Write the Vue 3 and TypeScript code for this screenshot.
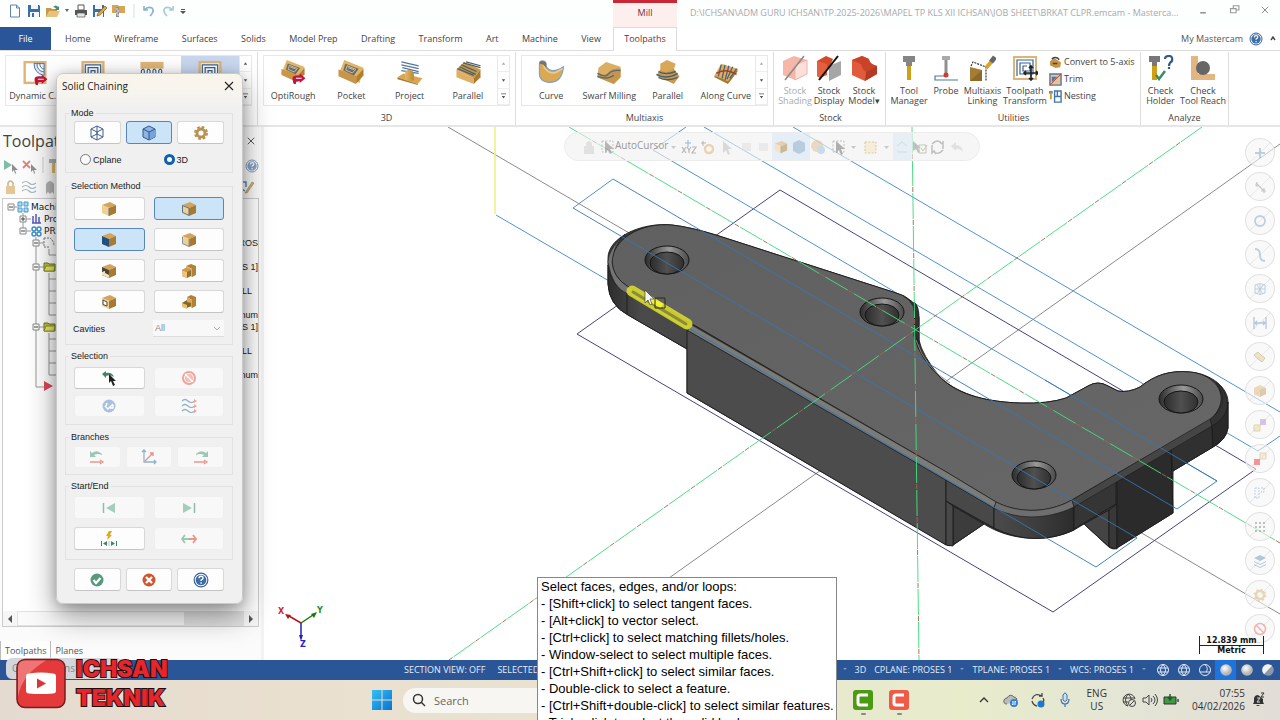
<script setup lang="ts">
import { ref } from 'vue'

interface Item { label: string; icon: string; disabled?: boolean; active?: boolean; width?: string }
interface Gallery { title: string; items: Item[]; lead: string }

const tabs: string[] = ['Home', 'Wireframe', 'Surfaces', 'Solids', 'Model Prep', 'Drafting', 'Transform', 'Art', 'Machine', 'View']

const galleries: Gallery[] = [
  {
    title: '', lead: '#555',
    items: [
      { label: 'Dynamic C...', icon: 'g-dynamic' },
      { label: '', icon: 'g-spiral' },
      { label: '', icon: 'g-face' },
      { label: '', icon: 'g-spiral', active: true },
    ],
  },
  {
    title: '3D', lead: '#aaa',
    items: [
      { label: 'OptiRough', icon: 'g-optirough' },
      { label: 'Pocket', icon: 'g-pocket' },
      { label: 'Project', icon: 'g-project' },
      { label: 'Parallel', icon: 'g-parallel' },
    ],
  },
  {
    title: 'Multiaxis', lead: '#aaa',
    items: [
      { label: 'Curve', icon: 'g-curve' },
      { label: 'Swarf Milling', icon: 'g-swarf' },
      { label: 'Parallel', icon: 'g-parallel5' },
      { label: 'Along Curve', icon: 'g-along' },
    ],
  },
]
const stock: Item[] = [
  { label: 'Stock\nShading', icon: 's-shading', disabled: true, width: 'w34' },
  { label: 'Stock\nDisplay', icon: 's-display', width: 'w34' },
  { label: 'Stock\nModel▾', icon: 's-model', width: 'w36' },
]
const utilities: Item[] = [
  { label: 'Tool\nManager', icon: 'u-tool', width: 'w40' },
  { label: 'Probe', icon: 'u-probe', width: 'w34' },
  { label: 'Multiaxis\nLinking', icon: 'u-link', width: 'w38' },
  { label: 'Toolpath\nTransform', icon: 'u-transform', width: 'w46' },
]
const smallUtils: Item[] = [
  { label: 'Convert to 5-axis', icon: 'u-convert' },
  { label: 'Trim', icon: 'u-trim' },
  { label: 'Nesting', icon: 'u-nest' },
]
const analyze: Item[] = [
  { label: 'Check\nHolder', icon: 'a-holder', width: 'w38' },
  { label: 'Check\nTool Reach', icon: 'a-reach', width: 'w46' },
]
const quick: string[] = ['q-new', 'q-save', 'q-open', 'caret', 'q-print', 'q-saveas', 'q-zip', 'sep', 'q-undo', 'q-redo', 'caret2']
const methods: { icon: string; on?: boolean }[] = [
  { icon: 'c-edge' }, { icon: 'c-loop', on: true }, { icon: 'c-face', on: true }, { icon: 'c-outer' },
  { icon: 'c-partial' }, { icon: 'c-stack' }, { icon: 'c-inner' }, { icon: 'c-stack2' },
]
const hints: string[] = [
  'Select faces, edges, and/or loops:',
  '- [Shift+click] to select tangent faces.',
  '- [Alt+click] to vector select.',
  '- [Ctrl+click] to select matching fillets/holes.',
  '- Window-select to select multiple faces.',
  '- [Ctrl+Shift+click] to select similar faces.',
  '- Double-click to select a feature.',
  '- [Ctrl+Shift+double-click] to select similar features.',
  '- Triple-click to select the solid body.',
]
const masks: string[] = ['m-plus', 'm-line', 'm-circle', 'm-spline', 'm-mesh', 'm-dim', 'm-surf', 'm-solid', 'm-result', 'm-group', 'm-dash', 'm-points', 'm-layers', 'm-gear', 'm-none']
const tree: { level: string; label: string; tail: string }[] = [
  { level: 'l0', label: 'Machin', tail: '' },
  { level: 'l1', label: 'Pro', tail: '' },
  { level: 'l1', label: 'PRO', tail: '' },
  { level: 'l1', label: '', tail: 'ROS' },
  { level: 'l1', label: '', tail: '' },
  { level: 'l1', label: '', tail: 'S 1]' },
  { level: 'l1', label: '', tail: '' },
  { level: 'l1', label: '', tail: 'LL' },
  { level: 'l1', label: '', tail: '' },
  { level: 'l1', label: '', tail: 'num' },
  { level: 'l1', label: '', tail: 'S 1]' },
  { level: 'l1', label: '', tail: '' },
  { level: 'l1', label: '', tail: 'LL' },
  { level: 'l1', label: '', tail: '' },
  { level: 'l1', label: '', tail: 'num' },
]
const holes: [number, number][] = [[667, 260], [882, 312], [1034, 475], [1181, 399]]
const spheres: string[] = ['b-wire', 'b-wire', 'b-wire2', 'b-ball', 'b-ball', 'b-half']
const plane = ref('3D')
const query = ref('')
</script>

<template>
  <div class="app">
    <svg class="defs" aria-hidden="true">
      <defs>
        <linearGradient id="gTop" x1="0" y1="0" x2="1" y2="1"><stop offset="0" stop-color="#606060" /><stop offset="1" stop-color="#676767" /></linearGradient>
        <linearGradient id="gRound" x1="0" x2="1"><stop offset="0" stop-color="#4b4b4b" /><stop offset=".5" stop-color="#3e3e3e" /><stop offset="1" stop-color="#2c2c2c" /></linearGradient>
        <linearGradient id="gLeft" x1="0" x2="1"><stop offset="0" stop-color="#2d2d2d" /><stop offset=".4" stop-color="#4a4a4a" /><stop offset="1" stop-color="#474747" /></linearGradient>
        <linearGradient id="gHole" x1="0" x2="1"><stop offset="0" stop-color="#2b2b2b" /><stop offset=".55" stop-color="#9a9a9a" /><stop offset="1" stop-color="#4a4a4a" /></linearGradient>
        <linearGradient id="gBore" x1="0" x2="1"><stop offset="0" stop-color="#2c2c2c" /><stop offset=".5" stop-color="#505050" /><stop offset="1" stop-color="#303030" /></linearGradient>
        <radialGradient id="gBall" cx=".4" cy=".35"><stop offset="0" stop-color="#fff" /><stop offset="1" stop-color="#b5b5b5" /></radialGradient>
        <linearGradient id="gWin" x1="0" y1="0" x2="1" y2="1"><stop offset="0" stop-color="#35c0f5" /><stop offset="1" stop-color="#0a72cf" /></linearGradient>
        <linearGradient id="gOchre" x1="0" x2="1"><stop offset="0" stop-color="#e5b865" /><stop offset="1" stop-color="#b98836" /></linearGradient>
      </defs>

      <symbol id="q-new" viewBox="0 0 14 14"><path d="M2.500 1h6l3 3v9h-9z" fill="#fff" stroke="#5d83ad" /><path d="M8.500 1v3h3" fill="none" stroke="#5d83ad" /></symbol>
      <symbol id="q-save" viewBox="0 0 14 14"><path d="M1 1h11l1 1v11H1z" fill="#3a6fa5" /><path d="M4 1h7v4H4zM3 8h9v5H3z" fill="#f4f6f9" /><path d="M5 9h2v4H5z" fill="#3a6fa5" /></symbol>
      <symbol id="q-open" viewBox="0 0 14 14"><path d="M0 4h5l1 1h5v8H0z" fill="#c79a4b" /><path d="M3 7h11l-3 6H0z" fill="#e8c27d" /><path d="M7 3q3-3 5 0l1-1v4H9l1-1.500Q9 3 7 3z" fill="#4b8d6f" /></symbol>
      <symbol id="q-print" viewBox="0 0 14 14"><path d="M4 1h6v5H4z" fill="#fff" stroke="#555" /><path d="M1 6h12v5H1z" fill="#555" /><path d="M3 9h8v4H3z" fill="#e6e6e6" stroke="#555" stroke-width=".7" /></symbol>
      <symbol id="q-saveas" viewBox="0 0 14 14"><path d="M0 1h11v12H0z" fill="#3a6fa5" /><path d="M2 1h7v4H2zM2 8h8v5H2z" fill="#f4f6f9" /><path d="M4 12l1-3 7-7 2 2-7 7z" fill="#e4a83a" stroke="#5c4a22" stroke-width=".6" /></symbol>
      <symbol id="q-zip" viewBox="0 0 14 14"><path d="M0 1h6l1 1h6v7H0z" fill="#d6a556" /><path d="M4 3h3v10H4z" fill="#8d8d8d" /><path d="M4 5h2M5 7h2M4 9h2M5 11h2" stroke="#eee" /></symbol>
      <symbol id="q-undo" viewBox="0 0 14 14"><path d="M2 2v4h4M2 6q4-4 8-2 3 3-2 8" fill="none" stroke="#8bb1d0" stroke-width="1.600" /></symbol>
      <symbol id="q-redo" viewBox="0 0 14 14"><path d="M12 2v4H8M12 6Q8 2 4 4q-3 3 2 8" fill="none" stroke="#a8c9d8" stroke-width="1.600" /></symbol>
      <symbol id="caret" viewBox="0 0 4 14"><path d="M0 5h4L2 8z" fill="#666" /></symbol>
      <symbol id="caret2" viewBox="0 0 6 14"><path d="M0 7h6L3 10zM1 5h4v1H1z" fill="#555" /></symbol>
      <symbol id="sep" viewBox="0 0 2 14"><path d="M1 0v14" stroke="#ddd" /></symbol>

      <symbol id="arrowbadge" viewBox="0 0 14 12"><path d="M1 8Q-1 2 5 2h3V0l6 5-6 5V8H5q-1 0-1 3H2q-1-1-1-3z" fill="#c2143c" /><path d="M4 5h6" stroke="#fff" stroke-width="1.200" /></symbol>
      <symbol id="g-dynamic" viewBox="0 0 26 26"><path d="M1 1h24v24H1z" fill="#dfb577" /><path d="M3.500 3.500h19v19h-19z" fill="#fff" /><path d="M12 3.500h10.500V16Q12 14 12 3.500zM15 3.500q0 8 7.500 9M18 3.500q0 5 4.500 6" fill="#dde8f2" stroke="#4a6f97" /><use href="#arrowbadge" x="12" y="15" width="14" height="12" /></symbol>
      <symbol id="g-spiral" viewBox="0 0 26 26"><path d="M1 1h24v24H1z" fill="#dfb577" /><path d="M3.500 3.500h19v19h-19z" fill="#fff" /><path d="M5 22V5h16v15H8V8h10v9h-7v-6h4v3" fill="none" stroke="#3b638f" stroke-width="1.300" /></symbol>
      <symbol id="g-face" viewBox="0 0 26 26"><path d="M1 2h24v7H1z" fill="#dfb577" /><path d="M2 22V11q2-3 3 0v9q1 3 3 0v-9q1-3 3 0v9q1 3 3 0v-9q1-3 3 0v9q1 3 3 0v-9q2-3 3 0v11" fill="none" stroke="#3b638f" stroke-width="1.200" /></symbol>
      <symbol id="g-pocket" viewBox="0 0 26 26"><path d="M6 0l20 8-4 16L0 15z" fill="#e2b566" /><path d="M0 10l19 7-1 8L0 17z" fill="#c8954a" /><path d="M26 9l-7 8-1 8 8-9z" fill="#b07f33" /><path d="M7 4l14 5-5 7-11-5z" fill="#6d6b5f" /><path d="M9 6l9 3.500-3.500 4-7-3zM10 8l6 2" fill="none" stroke="#c9c6b3" /></symbol>
      <symbol id="g-optirough" viewBox="0 0 26 26"><use href="#g-pocket" width="26" height="24" /><use href="#arrowbadge" x="12" y="14" width="14" height="12" /></symbol>
      <symbol id="g-project" viewBox="0 0 26 26"><path d="M4 2l18 4M4 5l18 4M5 8l17 4M4 11l18 3" stroke="#52779f" stroke-width="1.300" /><path d="M0 18l6-4 20 5-5 6z" fill="#d9a651" /><path d="M0 18l21 7v1L0 20z" fill="#a87a31" /><path d="M8 12q5-4 9 1v8q-5 2-9-1z" fill="url(#gOchre)" /></symbol>
      <symbol id="g-parallel" viewBox="0 0 26 26"><path d="M1 10L9 2l17 8-7 9z" fill="#c9984a" /><path d="M1 10l18 9v6L1 18z" fill="#dfb063" /><path d="M26 10l-7 9v6l7-7z" fill="#a87a31" /><path d="M2 9l17 7M4 7l17 8M6 5l16 7M8 3l18 5M11 2l15 4" stroke="#4d5f66" stroke-width="1.300" /></symbol>
      <symbol id="g-curve" viewBox="0 0 26 26"><path d="M1 4q0-3 3-3t4 3q-1 4 3 6 6 3 15-3-1 9-5 13-5 4-12 3Q1 21 1 15z" fill="#dba956" stroke="#7fa3c4" stroke-width="1.300" /><path d="M3 4q3 0 3 4 5 7 12 5l7-4" fill="none" stroke="#f0cd8d" stroke-width="1.500" /><path d="M1 4q0-3 3-3t4 3v4L5 5z" fill="#7c7462" /></symbol>
      <symbol id="g-swarf" viewBox="0 0 26 26"><path d="M2 8l8-6 15 5v11l-7 7L1 18z" fill="#dcae62" /><path d="M2 13q7 5 11-1 4-4 12-3v9l-7 7-17-7z" fill="#c9954a" /><path d="M1 14q9 5 12 0 4-4 12-3M1 17q10 4 17-1" fill="none" stroke="#526d83" stroke-width="1.500" /></symbol>
      <symbol id="g-parallel5" viewBox="0 0 26 26"><path d="M5 4l7-4 9 4-3 9H5z" fill="#d9a857" /><path d="M5 10l-4 6 18 9 6-8-6-8-8 4z" fill="#cb9a4b" /><path d="M3 12q8 4 18 0M1 15q10 6 22-1M3 18q9 5 20 0" fill="none" stroke="#495e70" stroke-width="1.500" /></symbol>
      <symbol id="g-along" viewBox="0 0 26 26"><path d="M1 16l7-12 17 5-6 11-4 4z" fill="#dcae60" /><path d="M1 16l14 6 10-13v3L15 25 1 18z" fill="#a87a31" /><path d="M8 5L5 17M12 5l-3 14M16 6l-4 15M20 7l-6 13M24 9l-7 10" stroke="#4b6072" stroke-width="1.300" /><path d="M3 14q9-6 21 1" fill="none" stroke="#ad392f" stroke-width="1.500" /></symbol>

      <symbol id="s-display" viewBox="0 0 26 26"><path d="M1 6l9-5 7 3-3 7-10 12-3-2z" fill="#d4492a" /><path d="M1 6l10 3v11L4 23l-3-2z" fill="#e3603e" /><path d="M25 6v14l-12 6V11z" fill="#a6a6a6" /><path d="M3 25L22 1" stroke="#111" stroke-width="2" /></symbol>
      <symbol id="s-shading" viewBox="0 0 26 26"><path d="M1 6l11-5 13 4v14l-12 6-12-5z" fill="#f6b6a8" /><path d="M25 5v14l-12 6V10z" fill="#fbe0da" stroke="#efb3a8" /><path d="M3 25L22 1" stroke="#888" stroke-width="1.500" /></symbol>
      <symbol id="s-model" viewBox="0 0 26 26"><path d="M1 5l10-4 7 3q0 5 8 7v8l-12 7L1 20z" fill="#e05a3b" /><path d="M11 1l7 3q0 5 8 7l-11 6q-4-3-5-8L1 5z" fill="#c8432a" /><path d="M15 17l11-6v8l-12 7z" fill="#b23a22" /></symbol>
      <symbol id="u-tool" viewBox="0 0 26 26"><path d="M7 1h12v6h-3v4h-6V7H7z" fill="#858585" /><path d="M11 11h4v14h-4z" fill="#cf9f16" /></symbol>
      <symbol id="u-probe" viewBox="0 0 26 26"><path d="M9 1h8v4h-8z" fill="#aaa" /><path d="M13 5v16" stroke="#8f8f8f" stroke-width="3" /><circle cx="13" cy="20" r="2.500" fill="#d23a2e" /><path d="M25 25H2v-4h9" fill="none" stroke="#52779f" stroke-width="1.200" /></symbol>
      <symbol id="u-link" viewBox="0 0 26 26"><path d="M0 12l12 3v11H0z" fill="#a57c33" /><path d="M0 26l12-11v11z" fill="#8d6a2a" /><path d="M1 11l2-4 13 5v14" fill="none" stroke="#333" stroke-width="1.200" stroke-dasharray="2 1" /><path d="M16 13l6-7" stroke="#d9a423" stroke-width="4" /><path d="M21 7l4-5" stroke="#666" stroke-width="5" /></symbol>
      <symbol id="u-transform" viewBox="0 0 26 26"><path d="M1 1h24v24H1z" fill="#dfb577" /><path d="M3 3h20v20H3z" fill="#fff" /><path d="M5 21V5h16v14H8V8h10v8h-7v-5h4" fill="none" stroke="#3b638f" stroke-width="1.200" /><path d="M19 11v14M12 18h14M17 13l2-2 2 2M17 23l2 2 2-2M14 16l-2 2 2 2M24 16l2 2-2 2" fill="none" stroke="#222" stroke-width="1.700" /></symbol>
      <symbol id="u-convert" viewBox="0 0 14 14"><path d="M1 6l4-4 8 5-1 5-5 1-6-3z" fill="#c69443" /><path d="M3 3q5-3 8 1M4 8h5" fill="none" stroke="#444" stroke-width="1.500" /></symbol>
      <symbol id="u-trim" viewBox="0 0 14 14"><path d="M1 1h12v12H1z" fill="#e3c397" stroke="#55779b" stroke-width="1.500" /><path d="M3 4h6L3 10z" fill="#52779f" /><path d="M1 13L13 1" stroke="#b4453a" /></symbol>
      <symbol id="u-nest" viewBox="0 0 14 14"><path d="M0 1h4v3H0z" fill="#888" /><path d="M2 4v6" stroke="#cf9f16" stroke-width="2" /><path d="M6 1h7v12H6zM6 7h7M9 7V1" fill="none" stroke="#3f75ab" stroke-width="1.500" /></symbol>
      <symbol id="a-holder" viewBox="0 0 26 26"><path d="M1 1h11v6H9v4H4V7H1z" fill="#777" /><path d="M4 11h5v14H4z" fill="#cf9f16" /><path d="M8 20l3 4 6-8" fill="none" stroke="#3b8b63" stroke-width="2.500" /><path d="M17 4q0-3 4-3t3 5q-3 2-3 5M21 12v2" fill="none" stroke="#33598c" stroke-width="2.200" /></symbol>
      <symbol id="a-reach" viewBox="0 0 26 26"><path d="M1 1h7v18h17v6H1z" fill="#e2b680" /><circle cx="13" cy="13" r="7" fill="#666" /></symbol>

      <symbol id="i-help" viewBox="0 0 14 14"><circle cx="7" cy="7" r="6" fill="#fff" stroke="#345f96" /><circle cx="7" cy="7" r="4.700" fill="#3d6da8" /><path d="M5.300 5.500q0-1.800 1.800-1.800t1.700 1.500q0 1-1.700 1.800v.8M7.100 9v1.200" fill="none" stroke="#fff" stroke-width="1.200" /></symbol>
      <symbol id="i-x" viewBox="0 0 10 10"><path d="M1 1l8 8M9 1L1 9" stroke="currentColor" stroke-width="1.100" /></symbol>

      <symbol id="d-wire" viewBox="0 0 16 16"><path d="M8 1l6 3v8l-6 3-6-3V4zM2 4l6 3 6-3M8 7v8M8 1v8M2 12l6-3 6 3" fill="none" stroke="#3f5f8f" /></symbol>
      <symbol id="d-solid" viewBox="0 0 16 16"><path d="M8 1l6 3v8l-6 3-6-3V4z" fill="#8db4e2" stroke="#2f578f" /><path d="M8 7l6-3v8l-6 3z" fill="#79a3d8" /><path d="M2 4l6 3 6-3M8 7v8" fill="none" stroke="#2f578f" /></symbol>
      <symbol id="d-gear" viewBox="0 0 16 16"><circle cx="8" cy="8" r="4" fill="none" stroke="#b8914f" stroke-width="2.800" /><circle cx="8" cy="8" r="6" fill="none" stroke="#b8914f" stroke-width="2" stroke-dasharray="2.700 2.012" /></symbol>
      <symbol id="c-base" viewBox="0 0 16 16"><path d="M1 4l8-3 6 3-7 3z" fill="#d3a55c" /><path d="M1 4l7 3v8l-7-3z" fill="#f3ce8e" /><path d="M8 7l7-3v8l-7 3z" fill="#a87a31" /></symbol>
      <symbol id="c-edge" viewBox="0 0 16 16"><use href="#c-base" /><path d="M8 7v8" stroke="#5b7893" /></symbol>
      <symbol id="c-loop" viewBox="0 0 16 16"><use href="#c-base" /><path d="M1.500 4.500L8 7.200v7.200l-6.500-3z" fill="none" stroke="#56738c" /></symbol>
      <symbol id="c-face" viewBox="0 0 16 16"><use href="#c-base" /><path d="M1 4l7 3v8l-7-3z" fill="#22507e" /></symbol>
      <symbol id="c-outer" viewBox="0 0 16 16"><use href="#c-base" /><path d="M1.500 5v6.500L8 14.500V7" fill="none" stroke="#8195a6" /></symbol>
      <symbol id="c-partial" viewBox="0 0 16 16"><use href="#c-base" /><path d="M1 4l7 3v8l-7-3z" fill="#4d4636" /><path d="M1 9l3-1v2l4 2v3l-7-3z" fill="#f4e4c4" /></symbol>
      <symbol id="c-inner" viewBox="0 0 16 16"><use href="#c-base" /><path d="M2 6l4 2v4l-4-1.500z" fill="#fff" stroke="#3d4a55" /></symbol>
      <symbol id="c-stack" viewBox="0 0 16 16"><path d="M5 3l5-2 5 2v9l-4 2V6z" fill="#b08238" /><path d="M5 3l6 3v8l-6-3z" fill="#e2b263" /><path d="M1 7l4-2 5 2v6l-4 2-5-2z" fill="#94702f" /><path d="M1 7l5 2v6l-5-2z" fill="#edc47e" /><path d="M1 7l4-2 5 2-4 2z" fill="#cd9c4d" /></symbol>
      <symbol id="c-stack2" viewBox="0 0 16 16"><path d="M6 3l4-2 5 2v9l-4 2V6z" fill="#b08238" /><path d="M6 3l5 3v8l-5-3z" fill="#d9a958" /><path d="M1 9l5-3v2l4 1v3l-4 2-5-2z" fill="#86652a" /><path d="M1 9l5 2v4l-5-2z" fill="#e9bf78" /></symbol>
      <symbol id="d-pick" viewBox="0 0 16 16"><path d="M1 4l4-3v2q6-1 8 4-4-3-8-1v2z" fill="#3f8768" /><path d="M8 4v9l2-2 2 5 2-1-2-4h3z" fill="#222" /></symbol>
      <symbol id="d-stop" viewBox="0 0 16 16"><circle cx="8" cy="8" r="6" fill="none" stroke="#efa49b" stroke-width="2" /><circle cx="8" cy="8" r="4" fill="#f4bdb6" /><path d="M4 4l8 8" stroke="#fff" stroke-width="1.500" /></symbol>
      <symbol id="d-link" viewBox="0 0 16 16"><circle cx="8" cy="8" r="6.500" fill="#a9c0de" /><path d="M4 8l3 3 5-5M6 5l-1 3M9 10h3V7" fill="none" stroke="#fff" stroke-width="1.400" /></symbol>
      <symbol id="d-waves" viewBox="0 0 16 16"><path d="M1 3q3-3 6 0t7 0M1 8q3-3 6 0t7 0M1 13q3-3 6 0t7 0" fill="none" stroke="#8fb2c9" stroke-width="1.200" /><path d="M13 1l3 2-3 2zM13 6l3 2-3 2zM13 11l3 2-3 2z" fill="#efa49b" /></symbol>
      <symbol id="d-prev" viewBox="0 0 16 16"><path d="M1 8V2l2 2q5-4 10 1v1Q9 4 5 6l2 2z" fill="#9cc7b4" /><path d="M1 13h11M11 11l3 2-3 2" fill="none" stroke="#eb968b" stroke-width="1.400" /></symbol>
      <symbol id="d-next" viewBox="0 0 16 16"><path d="M15 8V2l-2 2Q8 0 3 5v1q4-2 8 0L9 8z" fill="#9cc7b4" /><path d="M1 13h11M11 11l3 2-3 2" fill="none" stroke="#eb968b" stroke-width="1.400" /></symbol>
      <symbol id="d-axes" viewBox="0 0 16 16"><path d="M3 1v12h12M1 3l2-2 2 2M13 11l2 2-2 2" fill="none" stroke="#8fb4cf" stroke-width="1.300" /><path d="M4 12l8-8M9 4h3v3" fill="none" stroke="#ea8f83" stroke-width="1.300" /></symbol>
      <symbol id="d-first" viewBox="0 0 16 16"><path d="M2.500 3v10" stroke="#8fbfa9" stroke-width="1.500" /><path d="M14 3v10L5 8z" fill="#a3cebb" /></symbol>
      <symbol id="d-last" viewBox="0 0 16 16"><path d="M13.500 3v10" stroke="#8fbfa9" stroke-width="1.500" /><path d="M2 3v10l9-5z" fill="#a3cebb" /></symbol>
      <symbol id="d-dyn" viewBox="0 0 16 16"><path d="M8 0h3L9 4h2L6 9l1-4H5z" fill="#e0a91a" /><path d="M.5 10v5M15.500 10v5" stroke="#3f8768" /><path d="M6 10v5l-4-2.500zM10 10v5l4-2.500z" fill="#3f8768" /><path d="M8 10v5" stroke="#999" stroke-width=".6" /></symbol>
      <symbol id="d-swap" viewBox="0 0 16 16"><path d="M8 8H1M4 4L1 8l3 4" fill="none" stroke="#9cc7b4" stroke-width="1.800" /><path d="M8 8h7M12 4l3 4-3 4" fill="none" stroke="#eb968b" stroke-width="1.800" /></symbol>
      <symbol id="d-ok" viewBox="0 0 16 16"><circle cx="8" cy="8" r="6.500" fill="#57997c" /><path d="M4.500 8l2.500 3 4.500-5" fill="none" stroke="#fff" stroke-width="2.200" /></symbol>
      <symbol id="d-cancel" viewBox="0 0 16 16"><circle cx="8" cy="8" r="6.500" fill="#cf5530" /><path d="M5 5l6 6M11 5l-6 6" stroke="#fff" stroke-width="2.400" /></symbol>

      <symbol id="m-plus" viewBox="0 0 14 14"><path d="M7 2v10M2 7h10" stroke="#6b97c1" stroke-width="2" /></symbol>
      <symbol id="m-line" viewBox="0 0 14 14"><path d="M3 3l8 8M2 5h4M4 2v5M8 11h5M11 8v5" stroke="#888" stroke-width="1.200" /></symbol>
      <symbol id="m-circle" viewBox="0 0 14 14"><circle cx="7" cy="7" r="5" fill="none" stroke="#6b97c1" stroke-width="1.800" /></symbol>
      <symbol id="m-spline" viewBox="0 0 14 14"><path d="M2 1q5 0 5 6t5 6" fill="none" stroke="#6b97c1" stroke-width="1.800" /></symbol>
      <symbol id="m-mesh" viewBox="0 0 14 14"><path d="M2 3q5-3 10 0v8q-5 3-10 0zM2 7h10M7 2v11M4 3l6 9M10 3l-6 9" fill="none" stroke="#6b97c1" /></symbol>
      <symbol id="m-dim" viewBox="0 0 14 14"><path d="M1 1v12M13 1v12M2 7h10M4 5L2 7l2 2M10 5l2 2-2 2" fill="none" stroke="#5486b8" stroke-width="1.300" /></symbol>
      <symbol id="m-surf" viewBox="0 0 14 14"><path d="M1 5l4-3 3 3 4 3-3 4-4-3z" fill="#e0c48c" stroke="#b08e4a" /></symbol>
      <symbol id="m-solid" viewBox="0 0 14 14"><path d="M1 4l6-3 6 3v6l-6 3-6-3z" fill="#d9ad62" /><path d="M7 6l6-2v6l-6 3z" fill="#bb8d45" /></symbol>
      <symbol id="m-result" viewBox="0 0 14 14"><path d="M7 1h6v6H7z" fill="#a77ec9" /><path d="M1 7h6v6H1z" fill="#f0d48a" stroke="#bfa052" /></symbol>
      <symbol id="m-group" viewBox="0 0 14 14"><path d="M7 1h6v6H7z" fill="#f0d9b0" stroke="#cca86a" /><path d="M1 7h6v6H1z" fill="#f2101c" /></symbol>
      <symbol id="m-dash" viewBox="0 0 14 14"><path d="M2 2h4v10H2zM8 2h3v4H8" fill="none" stroke="#6b97c1" stroke-dasharray="2 1" /></symbol>
      <symbol id="m-points" viewBox="0 0 14 14"><path d="M2 3h10M2 7h10M2 11h10" stroke="#777" stroke-width="2" stroke-dasharray="2 2" /></symbol>
      <symbol id="m-layers" viewBox="0 0 14 14"><path d="M1 4l6-3 6 3-6 3zM1 7l6 3 6-3v1l-6 3-6-3zM1 10l6 3 6-3v1l-6 3-6-3z" fill="#5486b8" /></symbol>
      <symbol id="m-gear" viewBox="0 0 14 14"><circle cx="7" cy="7" r="4" fill="none" stroke="#d2a85a" stroke-width="2.500" /><circle cx="7" cy="7" r="5.600" fill="none" stroke="#d2a85a" stroke-width="1.500" stroke-dasharray="2 2.400" /></symbol>
      <symbol id="m-none" viewBox="0 0 14 14"><circle cx="7" cy="7" r="5.500" fill="none" stroke="#e2574c" stroke-width="1.500" /><path d="M3 3l8 8" stroke="#e2574c" stroke-width="1.500" /></symbol>

      <symbol id="b-wire" viewBox="0 0 12 12"><path d="M6 .5a5.500 5.500 0 1 1 0 11a5.500 5.500 0 1 1 0-11M6 .5q-5 5.500 0 11M6 .5q5 5.500 0 11M1 4h10M1 8h10" fill="none" stroke="#dfe9f7" /></symbol>
      <symbol id="b-wire2" viewBox="0 0 12 12"><path d="M6 .5a5.500 5.500 0 1 1 0 11a5.500 5.500 0 1 1 0-11M6 .5q4 4 1 7.500M1 8h10" fill="none" stroke="#dfe9f7" /></symbol>
      <symbol id="b-ball" viewBox="0 0 12 12"><circle cx="6" cy="6" r="5.800" fill="url(#gBall)" /></symbol>
      <symbol id="b-half" viewBox="0 0 12 12"><circle cx="6" cy="6" r="5.800" fill="#8a97a8" /><path d="M2 10.200A5.800 5.800 0 0 1 10 1.800z" fill="#f2f2f2" /></symbol>
    </svg>

    <header class="titlebar">
      <div class="quick">
        <button v-for="(q, i) in quick" :key="i" class="bare" :class="{ slim: q === 'caret', mid: q === 'caret2' || q === 'sep' }" :aria-label="q"><svg><use :href="'#' + q" /></svg></button>
      </div>
      <div class="mill">Mill</div>
      <div class="path">D:\ICHSAN\ADM GURU ICHSAN\TP.2025-2026\MAPEL TP KLS XII ICHSAN\JOB SHEET\BRKAT CLPR.emcam - Masterca...</div>
      <div class="winbtns">
        <button class="bare" aria-label="Minimize"><svg viewBox="0 0 10 10"><path d="M3 7h4" stroke="#888" /></svg></button>
        <button class="bare" aria-label="Restore"><svg viewBox="0 0 10 10"><path d="M2.500 4h4v3h-4zM4.500 4V2h4v3h-2" fill="none" stroke="#999" stroke-width=".8" /></svg></button>
        <button class="bare grey" aria-label="Close"><svg viewBox="-4 -4 18 18"><use href="#i-x" width="10" height="10" /></svg></button>
      </div>
    </header>

    <nav class="tabs">
      <button class="file">File</button>
      <div class="tablist"><button v-for="t in tabs" :key="t" class="tab">{{ t }}</button></div>
      <button class="tab current">Toolpaths</button>
      <div class="mine">
        <a href="#">My Mastercam</a>
        <button class="bare" aria-label="Help"><svg><use href="#i-help" /></svg></button>
        <button class="bare chev" aria-label="Collapse ribbon"><svg viewBox="0 0 8 8"><path d="M2 5l2-3 2 3" fill="none" stroke="#444" stroke-width="1.400" /></svg></button>
      </div>
    </nav>

    <section class="ribbon">
      <div v-for="g in galleries" :key="g.title" class="group wide">
        <div class="gallery">
          <button v-for="(it, i) in g.items" :key="i" class="gitem" :class="{ active: it.active }">
            <svg><use :href="'#' + it.icon" /></svg><span>{{ it.label }}</span>
          </button>
          <div class="scroll">
            <button aria-label="Up"><svg viewBox="0 0 6 6"><path d="M1 4h4L3 1z" :fill="g.lead" /></svg></button>
            <button aria-label="Down"><svg viewBox="0 0 6 6"><path d="M1 2h4L3 5z" fill="#555" /></svg></button>
            <button aria-label="More"><svg viewBox="0 0 6 6"><path d="M0 0h6v1H0zM1 3h4L3 6z" fill="#555" /></svg></button>
          </div>
        </div>
        <h2>{{ g.title }}</h2>
      </div>
      <div class="group stock">
        <div class="big"><button v-for="it in stock" :key="it.label" class="bitem" :class="[it.width, { off: it.disabled }]"><svg><use :href="'#' + it.icon" /></svg><span>{{ it.label }}</span></button></div>
        <h2>Stock</h2>
      </div>
      <div class="group utils">
        <div class="big">
          <button v-for="it in utilities" :key="it.label" class="bitem" :class="it.width"><svg><use :href="'#' + it.icon" /></svg><span>{{ it.label }}</span></button>
          <div class="smalls"><button v-for="it in smallUtils" :key="it.label"><svg><use :href="'#' + it.icon" /></svg>{{ it.label }}</button></div>
        </div>
        <h2>Utilities</h2>
      </div>
      <div class="group an">
        <div class="big"><button v-for="it in analyze" :key="it.label" class="bitem" :class="it.width"><svg><use :href="'#' + it.icon" /></svg><span>{{ it.label }}</span></button></div>
        <h2>Analyze</h2>
      </div>
    </section>

    <main class="work">
      <aside class="panel">
        <div class="phead"><h1>Toolpaths</h1><button class="bare" aria-label="Close panel"><svg><use href="#i-x" /></svg></button></div>
        <div class="ptools">
          <svg class="ptl" viewBox="0 0 56 18"><g opacity=".65"><path d="M0 3l8 5-8 5z" fill="#3f9b7a" /><path d="M8 7v8l2-2 1 4 1-1-1-3h3z" fill="#555" /><path d="M19 4l7 7M26 4l-7 7" stroke="#d6452f" stroke-width="1.800" /><path d="M27 7v8l2-2 1 4 1-1-1-3h3z" fill="#555" /><path d="M45 2h8v4h-8z" fill="#888" /><path d="M48 6h3v10h-3z" fill="#cf9f16" /></g><path d="M39 0v16" stroke="#ccc" /></svg>
          <svg class="ptr" viewBox="0 0 14 14" opacity=".6"><use href="#i-help" /></svg>
        </div>
        <div class="ptools">
          <svg class="ptl" viewBox="0 0 56 18"><g opacity=".6"><path d="M2 8h9v8H2z" fill="#d6a556" /><path d="M4 8V5q2.500-4 5 0v3" fill="none" stroke="#a88545" stroke-width="1.500" /><path d="M18 5q4-3 7 0t7 0M18 9q4-3 7 0t7 0M18 13q4-3 7 0t7 0" fill="none" stroke="#6f8799" stroke-width="1.200" /><path d="M42 16V6q4-6 8 0v10l-2-2-2 2-2-2z" fill="#888" /></g></svg>
          <svg class="ptw" viewBox="0 0 14 14" opacity=".8"><path d="M0 2h5v5M1 9l3 2" fill="none" stroke="#3d6da8" stroke-width="1.500" /><path d="M4 13l7-11 2 1-7 10z" fill="#d9a423" stroke="#776" stroke-width=".6" /></svg>
        </div>
        <div class="treebox">
          <svg class="lines" viewBox="0 0 56 200">
            <path d="M8 8h8M20 14v18M20 20h8M20 32h8M33 38v150M33 44h8M46 50v6h8M33 68h8M33 128h8M46 74v42M46 80h8M46 92h8M46 104h8M46 116h8M46 134v42M46 140h8M46 152h8M46 164h8M46 176h8M33 188h8" fill="none" stroke="#999" />
            <g fill="#fff" stroke="#888"><path d="M5 5h6v6H5zM17 17h6v6h-6zM17 29h6v6h-6zM30 41h6v6h-6zM30 65h6v6h-6zM30 125h6v6h-6z" /></g>
            <path d="M6 8h4M18 20h4M20 18v4M18 32h4M31 44h4M31 68h4M31 128h4" stroke="#444" />
            <path d="M15 3h4v4h-4zM21 3h4v4h-4zM15 9h4v4h-4zM21 9h4v4h-4z" fill="#a9dcf4" stroke="#4b9cc8" />
            <path d="M29 24h9M30 17v7M33 15v9M36 18v6" stroke="#5a5ac0" stroke-width="1.500" />
            <g fill="none" stroke="#3f8fcf" stroke-width="1.400"><circle cx="31" cy="30" r="2" /><circle cx="36" cy="30" r="2" /><circle cx="31" cy="35" r="2" /><circle cx="36" cy="35" r="2" /></g>
            <path d="M41 39h6q4 3 4 8M41 39v9h6" fill="none" stroke="#777" stroke-dasharray="2 1" />
            <path d="M41 64h4l1 1h6v7H41zM41 124h4l1 1h6v7H41z" fill="#b9c23e" stroke="#6f7a2a" /><path d="M43 67h9l-1 5H41zM43 127h9l-1 5H41z" fill="#e9e95e" stroke="#6f7a2a" stroke-width=".7" />
            <path d="M41 182v10l9-5z" fill="#e0485a" />
          </svg>
          <ul class="tree"><li v-for="(r, i) in tree" :key="i" :class="r.level"><span>{{ r.label }}</span><span>{{ r.tail }}</span></li></ul>
          <div class="hbar"><button aria-label="Scroll left"><svg viewBox="0 0 6 8"><path d="M5 0v8L1 4z" fill="#555" /></svg></button><div class="thumb"></div><button aria-label="Scroll right"><svg viewBox="0 0 6 8"><path d="M1 0v8l4-4z" fill="#555" /></svg></button></div>
        </div>
        <div class="ptabs"><button class="sel">Toolpaths</button><button>Planes</button></div>
      </aside>

      <section class="view">
        <svg class="scene" viewBox="264 127 1016 533" preserveAspectRatio="xMidYMid slice">
          <g fill="none" stroke="#8a8a8a"><path d="M448 127L1280 614M1280 144L669 578" /></g>
          <path d="M495 127v87" stroke="#eef07a" stroke-width="1.500" />
          <path d="M577 334L1053 612 1256 469 780 190z" fill="none" stroke="#46437c" />
          <g fill="none" stroke="#4f93d2"><path d="M686 127L653 150 1217 481M613 179L573 208M1280 436L1258 451 704 127M793 127L1280 412M496 215L700 334" /></g>

          <g stroke="#1c1c1c" stroke-linejoin="round" stroke-width=".9">
            <path d="M608 258C608 238 640 222 672 225Q690 227 716 235L893 292Q918 298 919 318V340Q922 355 940 377C960 396 990 402 1020 403Q1048 404 1066 398L1088 386Q1098 380 1108 386L1118 391Q1128 393 1140 387C1155 375 1170 370 1190 372 1212 374 1228 388 1228 402V428Q1226 440 1213 447L1173 471V513L1118 547Q1114 551 1109 547L1084 524 1074 530C1050 542 1012 542 984 524L953 545Q949 547 945 544L687 393V349L628 315Q609 305 608 284z" fill="#3a3a3a" />
            <path d="M608 265Q612 288 628 294L690 330 687 349 628 315Q609 305 608 284z" fill="url(#gLeft)" />
            <path d="M687 330L946 480V545L687 393z" fill="#4c4c4c" />
            <path d="M946 480L994 508V528L946 501z" fill="#484848" />
            <path d="M994 508Q1034 525 1074 507V530Q1034 548 994 528z" fill="url(#gRound)" />
            <path d="M953 506L984 524 953 545z" fill="#3c3c3c" /><path d="M946 501L953 506V546L946 545z" fill="#484848" />
            <path d="M1074 507L1116 481V504L1074 529z" fill="#353535" />
            <path d="M1084 524L1109 510V547z" fill="#444" /><path d="M1109 510L1117 504V549L1109 547z" fill="#383838" />
            <path d="M1117 482L1171 449 1173 513 1117 548z" fill="#2b2b2b" />
            <path d="M1171 449L1212 426 1213 447 1173 471z" fill="#303030" />
            <path d="M1212 426Q1228 417 1228 402V428Q1226 440 1213 447z" fill="#292929" />
            <path d="M612 262C612 240 640 222 672 225Q690 227 716 235L893 292Q914 297 915 314L914 336Q920 360 942 379C960 396 990 402 1020 403Q1048 404 1066 398L1088 386Q1098 380 1108 386L1118 391Q1128 393 1140 387C1155 375 1170 370 1190 372 1216 374 1234 398 1210 420L1113 476 1072 500C1045 515 1015 512 996 502L948 473 627 286Q613 277 612 262z" fill="url(#gTop)" />
            <path d="M690 324L948 473 996 502 994 508 946 480 687 330z" fill="#7b7b78" stroke-width=".6" />
            <path d="M996 502C1015 512 1045 515 1072 500L1074 507C1045 521 1015 519 994 508z" fill="#6e6e6e" stroke-width=".6" />
            <path d="M1072 500L1210 419 1212 426 1074 507z" fill="#454545" stroke-width=".6" />
            <path d="M1210 419Q1232 403 1216 382L1221 386Q1237 412 1212 426z" fill="#333" stroke-width=".6" />
            <path d="M612 262Q613 277 627 286L690 324 688 330 628 294Q612 288 608 262Q608 250 625 234Q613 246 612 262z" fill="#747474" stroke-width=".6" />
            <path d="M627 294V314" />
            <path d="M914 302Q919 306 919 318V344L915 334z" fill="#333" />
            <path d="M916 340Q925 368 950 383" fill="none" stroke="#888" />
          </g>
          <g v-for="h in holes" :key="h[0]" stroke="#151515">
            <ellipse :cx="h[0]" :cy="h[1]" rx="22" ry="14" fill="url(#gHole)" />
            <ellipse :cx="h[0]" :cy="h[1] + 3" rx="17" ry="11" fill="url(#gBore)" />
          </g>
          <g fill="none" stroke="#3576b5" stroke-width=".9"><path d="M573 208L1137 538 1096 567 690 329M613 179L1177 509 1217 481 1045 380" /></g>
          <g fill="none">
            <path d="M569 127L1280 543M1202 127L449 660M912 127L919 660" stroke="#9a6a50" stroke-dasharray="5 28" stroke-dashoffset="-27" opacity=".9" />
            <path d="M569 127L1280 543M1202 127L449 660M912 127L919 660" stroke="#42dc80" stroke-dasharray="26 7" opacity=".95" />
          </g>
          <path d="M632 291L687 324" stroke="#d9db2b" stroke-width="11" stroke-linecap="round" opacity=".9" />
          <path d="M633 292L686 324" stroke="#8a8a3c" stroke-width="3" stroke-linecap="round" />
          <path d="M650 299l12 7" stroke="#f2f236" stroke-width="5" />
          <path d="M645 290v13l3-3 2 5 2-1-2-5h4z" fill="#f4f4f4" stroke="#333" stroke-width=".6" />
          <path d="M655 298h10v10h-10z" fill="none" stroke="#2c2c1c" />
          <g stroke-width="1.500"><path d="M301 623L289 616" stroke="#b01818" /><path d="M301 623L313 615" stroke="#187818" /><path d="M301 623V637" stroke="#2020b8" /></g>
          <path d="M285 614l6 1-3 4z" fill="#b01818" /><path d="M317 612l-6 2 3 4z" fill="#187818" /><path d="M301 641l-2-6h4z" fill="#2020b8" />
          <g class="axis"><text x="278" y="614" fill="#d32424">X</text><text x="317" y="613" fill="#1f8f1f">Y</text><text x="300" y="647" fill="#2222c8">Z</text></g>
        </svg>

        <div class="cursorbar">
          <svg viewBox="0 0 414 29">
            <path d="M19 13h10v8H19zM21 13v-3q3-4 6 0v3" fill="#ccc" />
            <path d="M37 8h11v11H37z" fill="none" stroke="#888" stroke-dasharray="2 1.500" /><path d="M40 8v12l3-3 2 4 2-1-2-4h4z" fill="#777" />
            <path d="M106 13h5l-2.500 3zM286 13h5l-2.500 3zM319 13h5l-2.500 3z" fill="#999" />
            <path d="M123 7v7M120 10h6" stroke="#6ba0c9" stroke-width="1.500" />
            <path d="M117 14l4 6M121 14l-4 6M122 14l2 3 2-3M124 17v3M127 14h4l-4 6h4" fill="none" stroke="#777" stroke-width="1.200" />
            <path d="M136 10h5M138 8v5" stroke="#777" /><circle cx="144" cy="16" r="4" fill="none" stroke="#e2ad6c" stroke-width="2.500" />
            <path d="M158 8v12l3-3 2 5 2-1-2-5h4z" fill="#bbb" />
            <path d="M177 10h9v8h-9zM194 10h9v8h-9z" fill="#ddd" />
            <path d="M207 0h38v29h-38z" fill="#d4e5f6" />
            <g transform="translate(209 7)"><use href="#c-edge" width="14" height="14" /></g><path d="M228 10l6-3 6 3v8l-6 3-6-3z" fill="#7c9fc6" />
            <circle cx="252" cy="13" r="6" fill="#d9bd8d" /><circle cx="256" cy="17" r="4" fill="#9bbede" />
            <path d="M268 8h11v11h-11z" fill="none" stroke="#888" stroke-dasharray="2 1.500" /><path d="M271 8v12l3-3 2 5 2-1-2-5h4z" fill="#666" />
            <path d="M300 9h11v11h-11z" fill="#f7e2b4" stroke="#b99b56" stroke-dasharray="2 1.500" />
            <path d="M328 0h18v29h-18z" fill="#d7e7f6" /><path d="M332 13l5-4 5 4M332 19h10" stroke="#a5bfd8" fill="none" />
            <path d="M348 8v10l3-2 2 4 2-1-2-4h3z" fill="#888" /><path d="M354 12h7v8h-7zM356 15l2 3 4-6" fill="none" stroke="#8a9a7a" />
            <path d="M367 11q6-6 10 0M378 17q-5 6-10 1M367 12v8l2-2 2 3M378 8v8" fill="none" stroke="#888" stroke-width="1.500" />
            <path d="M386 13l5-4v3q6 0 7 7-3-4-7-3v2z" fill="#ccc" />
          </svg>
          <label>AutoCursor</label>
        </div>

        <div class="masks"><button v-for="m in masks" :key="m" :aria-label="m"><svg><use :href="'#' + m" /></svg></button></div>
        <div class="scale"><span>12.839 mm</span><i></i><span>Metric</span></div>
      </section>
    </main>

    <footer class="status">
      <div class="sleft"><span>SECTION VIEW: OFF</span><span>SELECTED</span></div>
      <div class="sright">
        <span>0</span><i></i><span>3D</span><span>CPLANE: PROSES 1</span><i></i><span>TPLANE: PROSES 1</span><i></i><span>WCS: PROSES 1</span><i></i>
      </div>
      <div class="balls"><button v-for="(s, i) in spheres" :key="i" class="bare" :class="{ lit: i === 3 }" aria-label="Shading mode"><svg><use :href="'#' + s" /></svg></button></div>
    </footer>

    <footer class="taskbar">
      <button class="bare start" aria-label="Start"><svg viewBox="0 0 20 20"><path d="M0 0h9.500v9.500H0zM10.500 0H20v9.500h-9.500zM0 10.500h9.500V20H0zM10.500 10.500H20V20h-9.500z" fill="url(#gWin)" /></svg></button>
      <label class="search"><svg viewBox="0 0 14 14"><circle cx="6" cy="6" r="4.500" fill="none" stroke="#333" stroke-width="1.500" /><path d="M9 9l4 4" stroke="#333" stroke-width="1.500" /></svg><input v-model="query" type="text" placeholder="Search" aria-label="Search" /></label>
      <div class="apps">
        <button class="bare" aria-label="Camtasia"><svg class="app-g" viewBox="0 0 20 20"><path d="M15 5H7Q5 5 5 7v6q0 2 2 2h8" fill="none" stroke="#fff" stroke-width="3" /></svg><i></i></button>
        <button class="bare" aria-label="Camtasia Recorder"><svg class="app-r" viewBox="0 0 20 20"><path d="M15 5H7Q5 5 5 7v6q0 2 2 2h8" fill="none" stroke="#fff" stroke-width="3" /></svg><i></i></button>
      </div>
      <div class="tray">
        <svg viewBox="0 0 16 16"><path d="M4 10l4-4 4 4" fill="none" stroke="#333" stroke-width="1.300" /></svg>
        <svg viewBox="0 0 16 16"><path d="M4 12q-4 0-3-4 1-2 3-2 3-5 7-1 3 0 3 4" fill="#bbb" stroke="#666" /><circle cx="11" cy="11" r="4" fill="#2f80d0" /><path d="M9 10h4l-1-1M13 12H9l1 1" fill="none" stroke="#fff" /></svg>
        <svg viewBox="0 0 16 16"><path d="M2 7q3-7 10-3V1M13 6q2 3-1 5M2 9q1 4 5 5M12 4H9" fill="none" stroke="#444" stroke-width="1.300" /><circle cx="11" cy="12" r="3.500" fill="#1f78c8" /></svg>
        <svg viewBox="0 0 16 16"><path d="M6 3q2-4 4 0v5q-2 3-4 0z" fill="#cfe0f2" stroke="#3a70b0" /><path d="M4 7q0 5 4 5t4-5M8 12v3" fill="none" stroke="#3a70b0" stroke-width="1.200" /></svg>
        <div class="lang"><span>ENG</span><span>US</span></div>
        <svg class="tight" viewBox="0 0 16 16"><path d="M7 14A6 6 0 1 1 14 7M7 2q-5 6 0 12M7 2q4 3 3 6M2 6h12M2 10h5" fill="none" stroke="#444" /><circle cx="11" cy="11" r="3.500" fill="none" stroke="#444" /><path d="M9 13l4-4" stroke="#444" /></svg>
        <svg class="tight" viewBox="0 0 16 16"><path d="M1 6h3l3-3v10l-3-3H1zM9 6q2 2 0 4M11 4q4 4 0 8M13 2q5 6 0 12" fill="none" stroke="#444" /></svg>
        <svg class="tight" viewBox="0 0 16 16"><path d="M1 5h12v7H1z" fill="#3f9a43" stroke="#333" /><path d="M15 7v3M7 2v5M5 5l2 3 2-3" fill="none" stroke="#245c27" stroke-width="1.500" /></svg>
        <div class="clock"><span>07:55</span><span>04/02/2026</span></div>
        <svg viewBox="0 0 16 16"><path d="M3 12l1-2V6q1-3 4-3l5 4v3l1 2zM6 13q2 2 4 0z" fill="#333" /><path d="M11 1h3l-3 4h3" fill="none" stroke="#333" /><path d="M7 6h3l-3 4h3" fill="none" stroke="#ddd" /></svg>
      </div>
    </footer>

    <div class="hint"><p v-for="h in hints" :key="h">{{ h }}</p></div>

    <div class="dialog" role="dialog" aria-label="Solid Chaining">
      <div class="dtitle"><span>Solid Chaining</span><button class="bare" aria-label="Close"><svg><use href="#i-x" /></svg></button></div>
      <fieldset class="mode">
        <legend>Mode</legend>
        <div class="c3"><button aria-label="Wireframe"><svg><use href="#d-wire" /></svg></button><button class="on" aria-label="Solids"><svg><use href="#d-solid" /></svg></button><button aria-label="Options"><svg><use href="#d-gear" /></svg></button></div>
        <div class="radios"><label><input v-model="plane" type="radio" name="plane" value="Cplane" />Cplane</label><label><input v-model="plane" type="radio" name="plane" value="3D" />3D</label></div>
      </fieldset>
      <fieldset class="method">
        <legend>Selection Method</legend>
        <div class="c2 loose"><button v-for="m in methods" :key="m.icon" :class="{ on: m.on }" :aria-label="m.icon"><svg><use :href="'#' + m.icon" /></svg></button></div>
        <div class="cav"><label for="cav">Cavities</label><div class="pick"><select id="cav" disabled><option>All</option></select><svg viewBox="0 0 8 8"><path d="M1 3l3 3 3-3" fill="none" stroke="#aaa" /></svg></div></div>
      </fieldset>
      <fieldset class="sele">
        <legend>Selection</legend>
        <div class="c2"><button aria-label="Unselect"><svg><use href="#d-pick" /></svg></button><button disabled aria-label="Unselect all"><svg><use href="#d-stop" /></svg></button><button disabled aria-label="Link"><svg><use href="#d-link" /></svg></button><button disabled aria-label="Features"><svg><use href="#d-waves" /></svg></button></div>
      </fieldset>
      <fieldset class="bran">
        <legend>Branches</legend>
        <div class="c3"><button disabled aria-label="Previous branch"><svg><use href="#d-prev" /></svg></button><button disabled aria-label="Adjust"><svg><use href="#d-axes" /></svg></button><button disabled aria-label="Next branch"><svg><use href="#d-next" /></svg></button></div>
      </fieldset>
      <fieldset class="ends">
        <legend>Start/End</legend>
        <div class="c2 loose"><button disabled aria-label="Start"><svg><use href="#d-first" /></svg></button><button disabled aria-label="End"><svg><use href="#d-last" /></svg></button><button aria-label="Dynamic"><svg><use href="#d-dyn" /></svg></button><button disabled aria-label="Reverse"><svg><use href="#d-swap" /></svg></button></div>
      </fieldset>
      <div class="c3 actions"><button aria-label="OK"><svg><use href="#d-ok" /></svg></button><button aria-label="Cancel"><svg><use href="#d-cancel" /></svg></button><button aria-label="Help"><svg><use href="#i-help" /></svg></button></div>
    </div>

    <div class="chip"><span>C</span><span>ns</span></div>
    <div class="brand">
      <svg viewBox="0 0 50 50"><rect x="1" y="1" width="48" height="48" rx="8" fill="#e43a3c" stroke="#7a1b1e" stroke-width="1.500" /><path d="M2 38Q6 16 30 2H9Q2 2 2 9z" fill="#f28a86" opacity=".75" /><path d="M13 15q12-2 24 0 3 0 3 3v14q0 3-3 3-12 1-24 0-3 0-3-3V18q0-3 3-3z" fill="#fff" /><path d="M21 20v10l9-5z" fill="#dc3438" /></svg>
      <div class="bname"><span>ICHSAN</span><span>TEKNIK</span></div>
    </div>
  </div>
</template>

<style>
body { overflow: hidden; }
</style>

<style scoped>
* { box-sizing: border-box; }
.app { position: relative; display: flex; flex-direction: column; height: 100vh; min-height: 560px; overflow: hidden; background: #fff; font: 9px/12px "Open Sans", "Noto Sans", sans-serif; color: #444; }
.defs { position: absolute; width: 0; height: 0; }
button { font: inherit; color: inherit; padding: 0; border: 0; background: none; }
svg { display: block; }
h1, h2, p, ul { margin: 0; padding: 0; font-weight: 400; }
.bare svg { width: 14px; height: 14px; }
.titlebar { display: flex; height: 27px; flex: none; background: #fdfefe; }
.quick { display: flex; gap: 5px; align-items: center; width: 613px; flex: none; padding: 0 0 5px 8px; }
.quick .slim svg { width: 4px; }
.quick .mid svg { width: 6px; }
.mill { width: 64px; flex: none; text-align: center; background: #fcefee; border-top: 3px solid #cb2636; color: #7a2d38; line-height: 20px; font-size: 9px; }
.path { padding-left: 13px; line-height: 26px; color: #aaa; flex: 1; white-space: nowrap; overflow: hidden; }
.winbtns { display: flex; align-items: flex-start; gap: 17px; padding: 3px 8px 0 16px; }
.grey { color: #777; }
.tabs { display: flex; height: 24px; flex: none; border-bottom: 1px solid #dcdcdc; font-size: 9px; }
.file { width: 51px; flex: none; background: #2a5699; color: #fff; }
.tablist { display: flex; width: 562px; flex: none; justify-content: space-between; padding: 0 12px 0 14px; }
.current { width: 64px; flex: none; border: 1px solid #dcdcdc; border-bottom: 0; height: 24px; padding-bottom: 2px; background: #fff; color: #7a2d38; }
.mine { display: flex; align-items: center; gap: 6px; margin-left: auto; padding-right: 3px; }
.mine a { color: #555; text-decoration: none; }
.chev svg { width: 8px; height: 8px; }
.ribbon { display: flex; height: 76px; flex: none; border-bottom: 2px solid #e6e6e6; background: #fff; }
.group { display: flex; flex-direction: column; justify-content: space-between; border-right: 1px solid #ddd; padding: 3px 5px 0; margin: 1px 0 0; flex: none; }
.wide { width: 258px; }
.group h2 { text-align: center; font-size: 9px; height: 14px; line-height: 14px; }
.gallery { display: flex; height: 51px; border: 1px solid #e8e8e8; }
.gitem { flex: 1 1 0; min-width: 0; display: flex; flex-direction: column; align-items: center; gap: 5px; padding-top: 4px; white-space: nowrap; }
.gitem svg { width: 26px; height: 25px; flex: none; }
.gitem.active { background: #c9d8ee; }
.scroll { width: 12px; display: flex; flex-direction: column; border-left: 1px solid #e8e8e8; }
.scroll button { flex: 1; display: flex; align-items: center; justify-content: center; border-bottom: 1px solid #eee; }
.scroll svg { width: 5px; height: 6px; }
.stock, .utils, .an { padding-left: 4px; padding-right: 2px; }
.stock { width: 112px; }
.utils { width: 255px; padding-left: 3px; }
.an { width: 88px; padding: 3px 0 0; }
.big { display: flex; }
.bitem { display: flex; flex-direction: column; align-items: center; gap: 5px; line-height: 10px; flex: none; white-space: pre; }
.bitem svg { width: 26px; height: 26px; }
.w34 { width: 34px; } .w36 { width: 36px; } .w38 { width: 39px; } .w40 { width: 40px; } .w46 { width: 46px; }
.off { color: #aaa; }
.smalls { display: flex; flex-direction: column; gap: 3px; padding-left: 1px; }
.smalls button { display: flex; align-items: center; gap: 2px; height: 14px; white-space: nowrap; }
.smalls svg { width: 13px; height: 13px; flex: none; }
.work { display: flex; flex: 1; min-height: 0; }
.panel { width: 264px; flex: none; display: flex; flex-direction: column; background: #fbfbfb; border-right: 3px solid #f3f3f3; padding: 0 2px; }
.phead { display: flex; align-items: center; justify-content: space-between; height: 28px; padding: 0 4px 0 1px; }
.phead h1 { font-size: 16px; line-height: 28px; }
.phead svg { width: 8px; height: 8px; }
.ptools { display: flex; justify-content: space-between; align-items: center; height: 21px; padding-left: 2px; }
.ptl { width: 56px; height: 18px; }
.ptr { width: 14px; height: 14px; }
.ptw { width: 14px; height: 14px; margin-right: 4px; }
.treebox { position: relative; flex: 1; min-height: 0; display: flex; flex-direction: column; justify-content: space-between; margin: 1px 0 0; width: 257px; border: 1px solid #ccc; background: #fff; overflow: hidden; }
.lines { position: absolute; left: 0; top: 0; width: 56px; height: 200px; }
.tree { list-style: none; padding-top: 2px; font-family: "DejaVu Sans", sans-serif; font-size: 9px; color: #222; }
.tree li { display: flex; justify-content: space-between; height: 12px; padding-left: 41px; }
.tree .l0 { padding-left: 28px; }
.tree li span:last-child { min-width: 16px; font-family: "Liberation Sans", sans-serif; white-space: nowrap; }
.hbar { display: flex; height: 15px; background: #e3e3e3; flex: none; }
.hbar button { width: 14px; background: #f6f6f6; display: flex; align-items: center; justify-content: center; }
.hbar svg { width: 6px; height: 8px; }
.thumb { width: 168px; background: #fafafa; border: 1px solid #e2e2e2; margin-right: auto; }
.ptabs { display: flex; height: 33px; padding-top: 14px; flex: none; color: #555; margin-left: -2px; }
.ptabs button { padding: 0 5px; }
.ptabs .sel { padding: 0 3px 0 4px; border-right: 1px solid #bbb; border-left: 1px solid #bbb; background: #fff; }
.view { position: relative; flex: 1; min-width: 0; background: #fff; overflow: hidden; }
.scene { width: 100%; height: 100%; }
.axis { font: 700 8px "DejaVu Sans", sans-serif; }
.cursorbar { position: absolute; left: 300px; top: 5px; width: 416px; height: 29px; border-radius: 15px; background: rgba(240, 240, 240, .62); border: 1px solid #ececec; overflow: hidden; }
.cursorbar svg { width: 414px; height: 29px; opacity: .5; }
.cursorbar label { position: absolute; left: 50px; top: 6px; color: #999; font-size: 10px; }
.masks { position: absolute; right: 5px; top: 11px; display: flex; flex-direction: column; gap: 5px; }
.masks button { width: 30px; height: 29px; border-radius: 50%; border: 1px solid #e2e2e2; background: rgba(245, 245, 245, .6) linear-gradient(to bottom right, transparent 49%, #e2e2e2 50%, transparent 52%); display: flex; align-items: center; justify-content: center; }
.masks svg { width: 14px; height: 14px; opacity: .42; }
.scale { position: absolute; right: 16px; bottom: 6px; width: 65px; font: 700 8px/10px "DejaVu Sans", sans-serif; color: #111; text-align: center; border: solid #222; border-width: 0 1px; height: 18px; white-space: nowrap; }
.scale i { display: block; height: 1px; background: #222; }
.scale span { display: block; line-height: 9px; }
.status { display: flex; height: 20px; flex: none; align-items: center; background: #2a5596; color: #e6edf7; }
.sleft { display: flex; gap: 12px; padding-left: 404px; }
.sright { display: flex; gap: 8px; align-items: center; margin-left: auto; white-space: nowrap; }
.sright i { border: 2px solid transparent; border-top-color: #7f9bc6; width: 4px; height: 3px; }
.balls { display: flex; padding: 0 2px 0 6px; }
.balls button { width: 21px; height: 20px; display: flex; align-items: center; justify-content: center; }
.balls svg { width: 12px; height: 12px; }
.lit { background: #1f74dc; }
.taskbar { display: flex; height: 40px; flex: none; align-items: center; padding-left: 372px; background: linear-gradient(90deg, #e5dad0, #eae0cf 25%, #e7e3d0 50%, #e8eccb 75%, #e4e5d5 88%, #e2ddd6); color: #333; }
.start svg { width: 20px; height: 20px; }
.search { display: flex; align-items: center; gap: 6px; width: 434px; height: 25px; margin-left: 11px; padding-left: 9px; border-radius: 13px 4px 4px 13px; background: #f8f6f2; }
.search svg { width: 14px; height: 14px; }
.search input { border: 0; background: none; outline: 0; font: 11px "Open Sans", sans-serif; color: #444; flex: 1; min-width: 0; }
.search input::placeholder { color: #666; opacity: 1; }
.apps { display: flex; gap: 16px; padding: 5px 0 0 16px; }
.apps svg { width: 20px; height: 20px; border-radius: 3px; }
.apps i { display: block; width: 5px; height: 2px; margin: 3px auto 0; border-radius: 1px; background: #8a8a84; }
.app-g { background: #4a9a12; } .app-r { background: #ef5b47; }
.tray { display: flex; align-items: center; gap: 11px; margin-left: auto; padding-right: 14px; }
.tray svg { width: 16px; height: 16px; flex: none; }
.tray .tight { margin-right: -6px; }
.lang, .clock { display: flex; flex-direction: column; text-align: center; font-size: 10px; line-height: 13px; padding: 0 3px; }
.clock { text-align: right; padding: 0 0 0 8px; margin-right: -6px; }
.hint { position: absolute; left: 537px; top: 577px; min-width: 300px; height: 160px; padding: 0 2px 0 3px; background: #fff; border: 1px solid #888; color: #000; font: 13px/17px "Liberation Sans", Arial, sans-serif; white-space: nowrap; }
.dialog { position: absolute; left: 56px; top: 73px; width: 187px; padding: 0 9px 12px 8px; border-radius: 7px; border: 1px solid #c9c9c9; background: linear-gradient(#faf5ea, #f7f4ee 20px, #f0f0f0 34px); box-shadow: 0 12px 30px rgba(0, 0, 0, .4), 0 2px 12px rgba(0, 0, 0, .2); font: 9px/12px "Liberation Sans", Arial, sans-serif; color: #222; }
.dtitle { display: flex; justify-content: space-between; align-items: center; height: 24px; margin: 0 -1px 0 -3px; font: 10px "Open Sans", sans-serif; color: #222; }
.dtitle svg { width: 10px; height: 10px; }
fieldset { margin: 0; min-width: 0; border: 1px solid #e2e2e2; padding: 2px 8px 6px; }
legend { padding: 0 2px; margin-left: -5px; height: 12px; }
.mode { margin-top: 9px; }
.method { margin-top: 7px; padding: 5px 8px 7px; }
.sele { margin-top: 5px; padding: 5px 8px 7px; }
.bran { margin-top: 6px; padding: 3px 8px 6px; }
.ends { margin-top: 5px; padding: 4px 8px 9px; }
.c3 { display: grid; grid-template-columns: repeat(3, 1fr); gap: 5px; }
.c2 { display: grid; grid-template-columns: repeat(2, 1fr); gap: 6px 9px; }
.loose { row-gap: 8px; }
.c3 button, .c2 button { height: 23px; display: flex; align-items: center; justify-content: center; background: #fdfdfd; border: 1px solid #d8d8d8; border-radius: 3px; border-bottom-color: #c4c4c4; }
.c3 button.on, .c2 button.on { background: #cbe4f8; border-color: #5687b8; }
.c3 button:disabled, .c2 button:disabled { background: #f8f8f8; border-color: #efefef; }
.c3 svg, .c2 svg { width: 16px; height: 16px; }
.sele button { height: 22px; } .bran button { height: 22px; }
.actions { margin: 8px 9px 0; }
.radios { display: flex; gap: 42px; margin-top: 9px; padding-left: 6px; }
.radios label { display: flex; align-items: center; gap: 2px; height: 13px; }
.radios input { appearance: none; margin: 0; width: 11px; height: 11px; border-radius: 50%; border: 1px solid #777; background: #fafafa; }
.radios input:checked { border: 3px solid #0f5fae; background: #fff; }
.cav { display: flex; justify-content: space-between; align-items: center; height: 17px; margin: 7px 0 0 -1px; }
.pick { position: relative; width: 71px; height: 17px; background: #f8f8f8; border-bottom: 1px solid #ddd; }
.pick select { appearance: none; width: 100%; height: 16px; padding: 0 2px; border: 0; background: none; font: inherit; color: #888; opacity: 1; }
.pick svg { position: absolute; right: 3px; top: 4px; width: 8px; height: 8px; }
.chip { position: absolute; left: 6px; top: 658px; width: 120px; height: 21px; padding: 4px 51px 0 6px; display: flex; justify-content: space-between; border-radius: 6px 10px 10px 6px; background: #d3d6db; color: #888; font-size: 10px; }
.brand { position: absolute; left: 16px; top: 658px; display: flex; align-items: flex-start; gap: 10px; }
.brand svg { width: 50px; height: 51px; }
.bname { display: flex; flex-direction: column; margin-top: -3px; font: 900 23px/29px Inter, sans-serif; color: #e5262c; -webkit-text-stroke: 2px #1b0d0d; paint-order: stroke fill; }
</style>
